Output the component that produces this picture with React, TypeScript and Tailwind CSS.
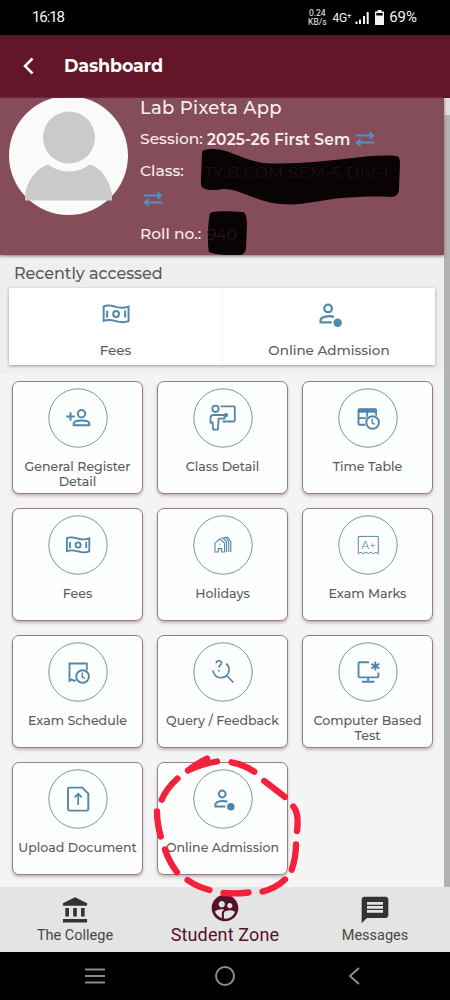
import type { ReactNode } from "react";
import { MdAccountBalance, MdMessage, MdSupervisedUserCircle } from "react-icons/md";

type TileType = {
  name: string;
  icon: ReactNode;
};

const FeesIcon = () => (
  <g strokeWidth="1.8">
    <path d="M18.9 23.2c4-1.7 7.4-.6 11 .4s7.5 1.3 11.4-.2v13c-3.9 1.5-7.8 1-11.4 0s-7.5-1.5-11-.2z" />
    <circle cx="30.1" cy="30" r="2.6" />
    <path d="M22 27v6.3M38.2 26.800v6.300" />
  </g>
);

const AdmissionIcon = () => (
  <g strokeWidth="2">
    <circle cx="29.2" cy="25" r="3.4" />
    <path d="M34.5 32.700c-4-1.500-12.100-.6-12.100 3.200v1.600h10" />
    <circle cx="37.8" cy="37.8" r="3.8" fill="currentColor" stroke="none" />
  </g>
);

const Clock = () => (
  <g>
    <circle cx="34.6" cy="34.5" r="7.800" fill="#fdfefe" stroke="none" />
    <circle cx="34.6" cy="34.5" r="6.300" strokeWidth="1.9" />
    <path d="M34.2 30.800v4l2.600 1.600" strokeWidth="1.4" />
  </g>
);

const tiles: TileType[] = [
  {
    name: "General Register Detail",
    icon: (
      <g strokeWidth="2">
        <path d="M22.5 24.300v8.400M18.200 28.500h8.600" />
        <circle cx="33.500" cy="25.700" r="3.700" />
        <path d="M25.700 37.300v-1.500c0-4.300 15.600-4.300 15.600 0v1.500z" />
      </g>
    ),
  },
  {
    name: "Class Detail",
    icon: (
      <g strokeWidth="1.8">
        <circle cx="22.5" cy="20.800" r="3.200" />
        <path d="M31.500 27H20.500c-2 0-3 1.300-3 3v4.500h2l.7 7.200h4.600l.8-11h5.900z" />
        <path d="M27.600 18.300h13.200c.7 0 1 .3 1 1v13.200c0 .7-.3 1-1 1H29.500" />
        <circle cx="33" cy="27.200" r="1.200" fill="currentColor" />
      </g>
    ),
  },
  {
    name: "Time Table",
    icon: (
      <g strokeWidth="1.9">
        <rect x="20.5" y="21.200" width="17.600" height="15.500" rx="1" />
        <path d="M20.500 22.700h17.600" strokeWidth="4" />
        <path d="M29.200 22v14M21 30.100h16" />
        <Clock />
      </g>
    ),
  },
  { name: "Fees", icon: <FeesIcon /> },
  {
    name: "Holidays",
    icon: (
      <g strokeWidth="1.1">
        <path d="M22 37v-8.800l4.800-4.400 4.800 4.400V37h-3.100v-3.400h-3.300V37zM26.200 29.300h1.200" />
        <path d="M28.300 23.300l1.300-.7 3.900 4.200V37M31 23l1.500-.8 3.200 4.300V37M33.500 22.600l1-.5 3.300 4.300V37" />
      </g>
    ),
  },
  {
    name: "Exam Marks",
    icon: (
      <g strokeWidth="1">
        <path d="M20.300 21.400h20v17.300l-2.400-1.400-2.500 1.400-2.500-1.400-2.500 1.400-2.500-1.400-2.500 1.400-2.500-1.400-2.600 1.400z" />
        <text x="30.500" y="33.900" textAnchor="middle" fontSize="10.500" textLength="14" fill="currentColor" stroke="none">
          A+
        </text>
      </g>
    ),
  },
  {
    name: "Exam Schedule",
    icon: (
      <g strokeWidth="1.8">
        <path d="M38.800 31V21.500H21.500v17.400l2.300-1.500 2.300 1.500 2.200-1.300 2 1.200" />
        <Clock />
      </g>
    ),
  },
  {
    name: "Query / Feedback",
    icon: (
      <g strokeWidth="1.6">
        <path d="M23.300 21.300c0-3.500 5.300-3.400 5.300-.2 0 2.100-2.700 2.200-2.700 4.600" />
        <path d="M25.900 28v1.500M20 28.300c.4 4.300 3.600 7.500 7.800 7.500 4.900 0 8.300-3.600 8.300-8.100 0-2.500-1.200-4.800-3-6.200M33.800 33.700l6.600 6.800" />
      </g>
    ),
  },
  {
    name: "Computer Based Test",
    icon: (
      <g strokeWidth="1.9">
        <path d="M31 20.200H21.700c-.8 0-1.200.4-1.200 1.200v12.800c0 .8.4 1.200 1.200 1.200h17.500c.8 0 1.200-.4 1.200-1.200v-3.700M30.100 35.500v4M24 39.800h12.500" />
        <path d="M37.300 19.600v9M33.400 21.900l7.800 4.500M41.200 21.900l-7.800 4.500" strokeWidth="1.900" />
      </g>
    ),
  },
  {
    name: "Upload Document",
    icon: (
      <g strokeWidth="1.9">
        <path d="M34.300 18.600H21.500c-1 0-1.500.5-1.500 1.500v20c0 1 .5 1.500 1.500 1.500h17.300c1 0 1.500-.5 1.500-1.500V24.700z" />
        <path d="M30.200 36V25M26.600 28.400l3.600-3.600 3.600 3.600" strokeWidth="1.700" />
      </g>
    ),
  },
  { name: "Online Admission", icon: <AdmissionIcon /> },
];

const SwapIcon = () => (
  <svg viewBox="0 0 20 16" className="h-4 w-5 shrink-0 text-[#5190c4]" fill="none" stroke="currentColor" strokeWidth="2">
    <path d="M.5 4.500h17M14.500 1.300l3.600 3.200-3.600 3.200M19.500 11.500h-17M5.500 8.300l-3.600 3.200 3.600 3.200" />
  </svg>
);

const StatusBar = () => (
  <div className="flex h-[35px] items-center bg-black pr-[33px] pl-8 font-['Roboto',sans-serif] text-gray-100">
    <span className="text-[15px] tracking-[-1.1px]">16:18</span>
    <div className="ml-auto flex items-center">
      <span className="text-center text-[8.5px] leading-[8.500px]">
        0.24
        <br />
        KB/s
      </span>
      <span className="ml-[6px] text-[12px] tracking-[-0.4px]">4G⁺</span>
      <svg viewBox="0 0 14 13" className="ml-1 h-[13px] w-[14px]" stroke="currentColor" strokeWidth="2">
        <path d="M1.500 13v-2.500M5 13V8.500M9 13V5M12.700 13V1" />
      </svg>
      <svg viewBox="0 0 9 15" className="ml-1.5 h-[15px] w-[9px]">
        <path d="M2.500 0h4v1.500H9V15H0V1.500h2.500z" fill="currentColor" />
        <path d="M1.300 3h6.400v2.500H1.300z" fill="#000" />
      </svg>
      <span className="ml-[5px] text-[15px]">69%</span>
    </div>
  </div>
);

const Profile = () => (
  <section className="relative flex h-[157px] overflow-hidden bg-[#854d5a] text-[#fbeef0] shadow-[0_1px_3px_#8a6a70]">
    <svg viewBox="0 0 119 119" className="-mt-[2px] ml-[9px] h-[119px] w-[119px] shrink-0">
      <circle cx="59.5" cy="59.5" r="59.5" fill="#fafafa" />
      <path d="M16 104.500v-5C18 84 28 72 39 68.500h42c11 3.500 20 15.500 22 30.500v5.500z" fill="#cacaca" />
      <circle cx="60" cy="41.5" r="34" fill="#fafafa" />
      <circle cx="60" cy="41.5" r="26" fill="#cacaca" />
    </svg>
    <div className="ml-3 flex flex-col text-[15.5px] leading-[22px] font-medium whitespace-nowrap">
      <p className="-mt-px text-[18px] tracking-[0.3px]">Lab Pixeta App</p>
      <div className="mt-[7px] flex items-center">
        <span className="w-[67px]">Session:</span>
        <span className="mt-[3px] font-semibold tracking-[0.1px]">2025-26 First Sem</span>
        <span className="ml-[5px]">
          <SwapIcon />
        </span>
      </div>
      <p className="mt-[9px]">Class:</p>
      <div className="mt-[8px] flex h-[18px] items-center pl-[3px]">
        <SwapIcon />
      </div>
      <p className="mt-[15px]">Roll no.:</p>
    </div>
    {/* marker strokes that hide the class and the roll number */}
    <svg viewBox="0 98 444 157" className="absolute inset-0 h-[157px] w-[444px]">
      <path d="M204 150c7-2 17-1 25 2 10 4 21 9 34 11 30 2 60-2 90-5 14-2 30-3 43-2 3 0 4 3 4 7l-1 26c0 5-3 8-8 8-17-1-34 0-50 1-20 2-40 8-60 6-22-1-41-15-57-15-8 1-16 2-21-1-3-2-2-6-2-11l1-23c0-2 0-3 2-4z" fill="#0a0305" />
      <path d="M210 213c10-3 22-1 33-1 3 1 4 6 4 13l-1 24c-1 5-5 7-10 7-9-1-19-1-27-4-2-8-1-30 1-39z" fill="#0a0305" />
      <text x="204" y="177.500" fontSize="15.5" fill="#1c1214" textLength="184">
        TY.B.COM SEM-5 DIV-1
      </text>
      <text x="207" y="239.500" fontSize="15.5" fill="#241a1c">
        940
      </text>
    </svg>
  </section>
);

const RecentlyAccessed = () => (
  <section className="h-[119px] bg-[#efefef] pt-[7px] font-medium text-[#5b5b5b]">
    <h2 className="h-[26px] pl-3.5 text-[16px] leading-[23px] tracking-[-0.05px]">Recently accessed</h2>
    <div className="ml-[9px] flex h-[77px] w-[426px] bg-white text-[13.5px] shadow-[0_1px_3px_rgba(0,0,0,0.35)]">
      <div className="flex w-[213px] flex-col items-center">
        <svg viewBox="3 3 54 54" className="-mt-[4px] h-[60px] w-[60px] text-[#5388ad]" fill="none" stroke="currentColor">
          <FeesIcon />
        </svg>
        <span className="-mt-1 leading-[20px]">Fees</span>
      </div>
      <div className="flex w-[213px] flex-col items-center border-l border-gray-100">
        <svg viewBox="3 3 54 54" className="-mt-[4px] h-[60px] w-[60px] text-[#5388ad]" fill="none" stroke="currentColor">
          <AdmissionIcon />
        </svg>
        <span className="-mt-1 leading-[20px]">Online Admission</span>
      </div>
    </div>
  </section>
);

const Tile = ({ name, icon }: TileType) => (
  <button className="flex h-[113px] flex-col items-center rounded-[7px] border border-[#9b7c84] bg-[#fdfefe] px-[1px] pt-[6px] shadow-[0_2px_3px_rgba(80,40,50,0.3)]">
    <svg viewBox="0 0 60 60" className="h-[60px] w-[60px] shrink-0 text-[#5086ab]" fill="none" stroke="currentColor">
      <circle cx="30" cy="30" r="29.200" stroke="#7895a8" />
      {icon}
    </svg>
    <span className="mt-[11px] text-[12.6px] leading-[15.300px] font-medium text-[#5b5b5b]">{name}</span>
  </button>
);

/* hand-drawn dashed ring around the last tile */
const MarkerRing = () => (
  <svg
    viewBox="150 750 156 150"
    className="pointer-events-none absolute top-[750px] left-[150px] h-[150px] w-[156px]"
    fill="none"
    stroke="#f3213c"
    strokeWidth="6.300"
    strokeLinecap="round"
  >
    <path d="M188 770.500q9-7 19-12M188 770.500q15-7 29-9" />
    <path d="M177.500 778.500q-11 10-15.800 21.200M157 811.500q0 12 3.800 25M165 849.500q4 12 12 22.800" />
    <path d="M187.500 880q10 7 22 10M223.500 893q12 1 25-.5M262.500 891.500q13-3 22.500-12" />
    <path d="M231.500 762.300q12 2 22.800 9.400M264.300 781l20.700 16M293.300 806.500q6 7 3.700 24.500M296 844.300q0 13-4.300 25.400" />
  </svg>
);

const BottomNav = () => (
  <nav className="h-[65px] bg-[#e4e4e4] font-['Roboto',sans-serif] text-[#484848]">
    <div className="grid h-full grid-cols-3">
      <div className="flex flex-col items-center pt-[9px]">
        <MdAccountBalance className="h-[29px] w-[30px] text-[#333]" />
        <span className="text-[14.500px] leading-[21px]">The College</span>
      </div>
      <div className="flex flex-col items-center pt-[5px] text-[#561229]">
        <MdSupervisedUserCircle className="h-[32px] w-[32px]" />
        <span className="text-[18px] leading-[22px] tracking-[0.15px]">Student Zone</span>
      </div>
      <div className="flex flex-col items-center pt-[7px]">
        <MdMessage className="h-[32px] w-[32px] text-[#333]" />
        <span className="text-[14.500px] leading-[20px]">Messages</span>
      </div>
    </div>
  </nav>
);

const SystemNav = () => (
  <div className="grid h-[48px] grid-cols-3 items-center bg-black text-[#8c8c8c]">
    <div className="flex flex-col items-center pl-[40px]">
      <svg viewBox="0 0 20 16" className="h-4 w-5" stroke="currentColor" strokeWidth="2.200">
        <path d="M0 1.500h20M0 8h20M0 14.500h20" />
      </svg>
    </div>
    <div className="mx-auto h-5 w-5 rounded-full border-2 border-current" />
    <svg viewBox="0 0 12 18" className="ml-[48px] h-[18px] w-3" fill="none" stroke="currentColor" strokeWidth="2">
      <path d="M11 1L2 9l9 8" />
    </svg>
  </div>
);

const App = () => {
  return (
    <div className="relative flex h-[1000px] w-[450px] flex-col overflow-hidden bg-[#f4f4f4] font-['Montserrat','Inter',sans-serif]">
      <StatusBar />
      <header className="flex h-[63px] items-center bg-[#631629] pl-[22px] text-white">
        <svg viewBox="0 0 12 18" className="mt-[-1px] h-[18px] w-3" fill="none" stroke="currentColor" strokeWidth="2.500">
          <path d="M10.500 1.500L3 9l7.500 7.500" />
        </svg>
        <h1 className="ml-[30px] text-[17.500px] font-bold tracking-[-0.15px]">Dashboard</h1>
      </header>
      <main className="flex h-[789px]">
        <div className="w-[444px]">
          <Profile />
          <RecentlyAccessed />
          <div className="grid w-[434px] grid-cols-[131px_131px_131px] gap-[14px] pt-[7px] pl-[12px]">
            {tiles.map((tile) => (
              <Tile key={tile.name} {...tile} />
            ))}
          </div>
        </div>
        <div className="w-[6px] bg-[#dedede] pt-[17px]">
          <div className="h-full bg-[#b2b2b2]" />
        </div>
      </main>
      <BottomNav />
      <SystemNav />
      <MarkerRing />
    </div>
  );
};

export default App;
